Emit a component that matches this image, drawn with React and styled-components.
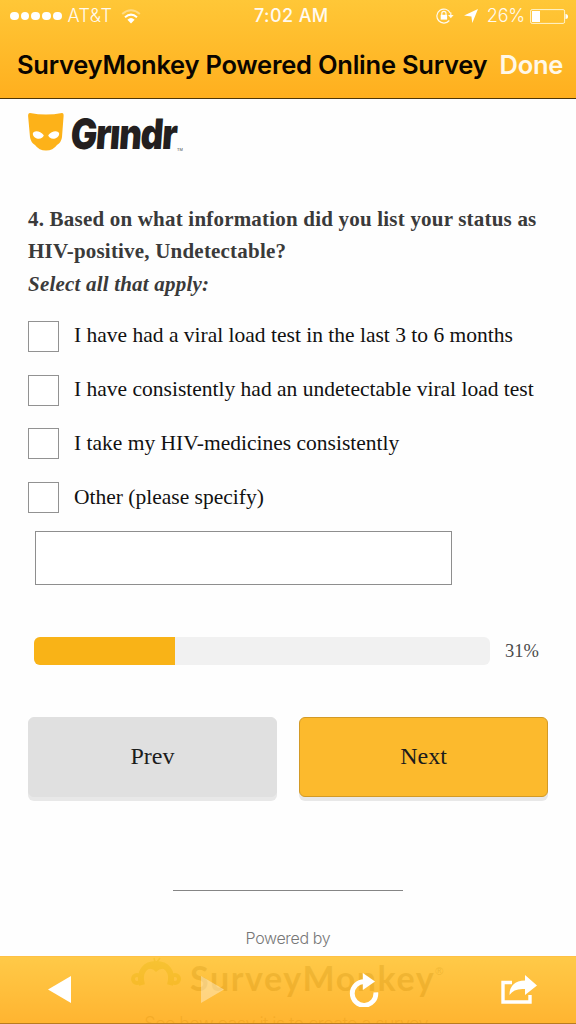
import React, { useState } from 'react';
import styled, { createGlobalStyle } from 'styled-components';

const GlobalStyle = createGlobalStyle`
  * {
    box-sizing: border-box;
  }

  body {
    margin: 0;
    background: #fefefe;
    overflow: hidden;
  }
`;

const Screen = styled.div`
  position: relative;
  width: 576px;
  height: 1024px;
  overflow: hidden;
  background: #fefefe;
  font-family: "Liberation Serif", "Times New Roman", serif;
  white-space: nowrap;
`;

const Header = styled.header`
  height: 99px;
  background: linear-gradient(#ffc737, #ffaf1e);
  border-bottom: 1px solid #4d3508;
  font-family: Inter, "Liberation Sans", sans-serif;
`;

const StatusBar = styled.div`
  height: 32px;
  padding: 0 8px 0 10px;
  display: grid;
  grid-template-columns: 244px 1fr auto;
  align-items: center;
  color: #fffaf0;
`;

const StatusGroup = styled.div`
  display: flex;
  align-items: center;
`;

const Signal = styled.div`
  display: flex;
  gap: 1.9px;
  margin-right: 6px;
`;

const Dot = styled.span`
  width: 8.8px;
  height: 8.8px;
  border-radius: 50%;
  background: #fff;
`;

const StatusText = styled.span`
  font-size: 18px;
  line-height: 32px;
  font-weight: ${({ weight }) => weight || 400};
  letter-spacing: ${({ spacing }) => spacing || '0'};
`;

const StatusIcon = styled.svg`
  display: block;
  margin-left: ${({ gap }) => gap}px;
`;

const TitleBar = styled.div`
  height: 64px;
  padding: 0 13px 0 17px;
  display: flex;
  align-items: center;
  justify-content: space-between;
`;

const Title = styled.h1`
  margin: 0;
  font-size: 25.5px;
  font-weight: 600;
  letter-spacing: -0.24px;
  color: #0a0500;
`;

const Done = styled.button`
  padding: 0;
  border: 0;
  background: none;
  font: 600 25.5px Inter, "Liberation Sans", sans-serif;
  letter-spacing: -0.3px;
  color: #fff8e8;
`;

const Page = styled.main`
  padding: 14px 28px 0;
`;

const Brand = styled.div`
  display: flex;
  height: 40px;
`;

const Wordmark = styled.div`
  width: 106px;
  margin-left: 7px;
  font: 900 42px/41px Inter, sans-serif;
  letter-spacing: -1.6px;
  color: #231f20;
  transform: scaleX(0.84) skewX(-5deg);
  transform-origin: 0 50%;
`;

const Trademark = styled.span`
  align-self: flex-end;
  font: 4px/6px "Liberation Sans", sans-serif;
  color: #444;
`;

const Question = styled.h2`
  margin: 50px 0 21px;
  font-size: 21px;
  line-height: 32.3px;
  font-weight: bold;
  letter-spacing: 0.2px;
  color: #3a3a3a;
`;

const Options = styled.div`
  display: grid;
  row-gap: 22.8px;
`;

const Option = styled.label`
  height: 31px;
  display: flex;
  align-items: center;
  font-size: 21.5px;
  color: #111;

  span {
    margin: -1px 0 0 15px;
  }
`;

const Checkbox = styled.input`
  appearance: none;
  width: 31px;
  height: 31px;
  margin: 0;
  border: 1px solid #929292;
  background: #fff;
`;

const OtherField = styled.input`
  display: block;
  width: 417px;
  height: 54px;
  margin: 18px 0 0 7px;
  border: 1px solid #8e8e8e;
  border-radius: 0;
  background: #fff;
`;

const Progress = styled.div`
  display: flex;
  align-items: center;
  margin: 52px 0 0 6px;
  font-size: 18.5px;
  line-height: 28px;
  color: #4a4a4a;
`;

const Track = styled.div`
  width: 456px;
  height: 28px;
  margin-right: 15px;
  overflow: hidden;
  border-radius: 6px;
  background: #f1f1f1;
`;

const Fill = styled.div`
  height: 100%;
  background: #f9b317;
`;

const Buttons = styled.div`
  display: grid;
  grid-template-columns: 249px 249px;
  justify-content: space-between;
  margin-top: 52px;
`;

const Button = styled.button`
  height: 80px;
  padding: 0 0 2px;
  border: 1px solid ${({ $primary }) => ($primary ? '#d39a26' : '#e0e0e0')};
  border-radius: 6px;
  background: ${({ $primary }) => ($primary ? '#fcba2d' : '#e0e0e0')};
  box-shadow: 0 4px 0 #e8e8e8;
  font: 24px "Liberation Serif", serif;
  color: #1c1c1c;
`;

const Footer = styled.footer`
  display: flex;
  flex-direction: column;
  align-items: center;
  margin-top: 93px;
  font-family: "Liberation Sans", sans-serif;
`;

const Rule = styled.div`
  width: 230px;
  height: 1px;
  background: #858585;
`;

const Powered = styled.div`
  margin-top: 37px;
  font: 300 16px/20px Inter, "Liberation Sans", sans-serif;
  letter-spacing: -0.35px;
  color: #777;
`;

const MonkeyBrand = styled.div`
  display: flex;
  width: 314px;
  height: 56px;
  margin-top: 9px;
  color: #444;
`;

const MonkeyName = styled.span`
  margin-left: 9px;
  font: 700 34px/42px Lato, sans-serif;
  letter-spacing: 1.6px;
`;

const Registered = styled.span`
  font: 11px/28px "Liberation Sans", sans-serif;
`;

const SurveyLink = styled.div`
  font: 300 18px/22px Inter, sans-serif;
  letter-spacing: -0.6px;
  color: #777;
`;

const Toolbar = styled.nav`
  position: absolute;
  left: 0;
  right: 0;
  bottom: 0;
  height: 68px;
  display: flex;
  align-items: center;
  padding-left: 48px;
  border-top: 1px solid rgba(255, 196, 75, 0.8);
  border-bottom: 1px solid #b97c20;
  background: linear-gradient(rgba(255, 197, 56, 0.92), rgba(255, 174, 31, 0.92));
`;

const ToolButton = styled.button`
  margin: 0 ${({ $space }) => $space || 0}px 0 0;
  padding: 0;
  border: 0;
  background: none;
  line-height: 0;
  opacity: ${({ disabled }) => (disabled ? 0.36 : 1)};
`;

const answers = [
  'I have had a viral load test in the last 3 to 6 months',
  'I have consistently had an undetectable viral load test',
  'I take my HIV-medicines consistently',
  'Other (please specify)',
];

const Wifi = () => (
  <StatusIcon gap={9} width="20" height="15" viewBox="0 0 20 15" fill="none" stroke="#fff" strokeWidth="2">
    <path d="M1.2 5Q10-2.5 18.8 5" opacity=".4" />
    <path d="M4 8.2Q10 3 16 8.2" />
    <path d="M6.4 10.8Q10 7.2 13.6 10.8L10 14.4Z" fill="#fff" stroke="none" />
  </StatusIcon>
);

const RotationLock = () => (
  <StatusIcon gap={0} width="18" height="16" viewBox="0 0 18 16" fill="none" stroke="#fffaf0" strokeWidth="1.2">
    <path d="M14.2 5A7 7 0 1 0 13.3 12.5M14.8 7V4.5" />
    <path d="M12 7H17.6L14.8 10.2Z" fill="#fffaf0" stroke="none" />
    <path d="M5.8 7V5.4a2.1 2.1 0 0 1 4.2 0V7" />
    <path d="M4.7 6.8h6.4v4.8H4.7z" fill="#fff" stroke="none" />
  </StatusIcon>
);

const Mask = () => (
  <svg width="36" height="38" viewBox="0 0 36 38">
    <path
      d="M2 0Q18 3 34 0Q35.8 0 35.6 3L34 24Q33.5 29 29 32Q25 37.5 18 37.5T7 32Q2.5 29 2 24L.1 3Q0 0 2 0Z"
      fill="#fdb219"
    />
    <path
      d="M4.8 20.7C5 17.5 12 17 15.8 22.3C14.5 27.5 5.3 26.5 4.8 20.7ZM31.2 20.7C31 17.5 24 17 20.2 22.3C21.5 27.5 30.7 26.5 31.2 20.7Z"
      fill="#fff"
    />
  </svg>
);

const Monkey = () => (
  <svg width="50" height="34" viewBox="0 0 50 34" fill="none" stroke="#93b400">
    <path d="M11 28C7 14 15 7 25 7S43 14 39 28" strokeWidth="6" />
    <path d="M14 14Q20 9 25 15Q31 9 37 14L35 8L25 4L15 8Z" fill="#93b400" stroke="none" />
    <circle cx="6" cy="22" r="4" strokeWidth="4" />
    <circle cx="44" cy="22" r="4" strokeWidth="4" />
    <path d="M24 5L23 1M26 5L29 1" strokeWidth="1.5" />
  </svg>
);

const App = () => {
  const [checked, setChecked] = useState([]);
  const progress = 31;

  const toggle = (index) => {
    setChecked(checked.includes(index) ? checked.filter((i) => i !== index) : [...checked, index]);
  };

  return (
    <>
      <GlobalStyle />
      <Screen>
        <Header>
          <StatusBar>
            <StatusGroup>
              <Signal>
                {[1, 2, 3, 4, 5].map((n) => <Dot key={n} />)}
              </Signal>
              <StatusText weight={300} spacing="0.4px">AT&amp;T</StatusText>
              <Wifi />
            </StatusGroup>
            <StatusText weight={500} spacing="0.4px">7:02 AM</StatusText>
            <StatusGroup>
              <RotationLock />
              <StatusIcon gap={10} width="14" height="14" viewBox="0 0 14 14">
                <path d="M14 0L8.3 14L7.4 7.4L0 6.4Z" fill="#fff" />
              </StatusIcon>
              <StatusText weight={300} spacing="-0.2px">&ensp;26%</StatusText>
              <StatusIcon gap={5} width="38" height="15" viewBox="0 0 38 15">
                <rect x=".6" y=".6" width="34" height="13.8" rx="1.5" fill="none" stroke="#fff4cf" />
                <path d="M2 2H10V13H2Z" fill="#fff" />
                <path d="M35.5 5Q38 5 38 7.5Q38 10 35.5 10Z" fill="#fff" />
              </StatusIcon>
            </StatusGroup>
          </StatusBar>
          <TitleBar>
            <Title>SurveyMonkey Powered Online Survey</Title>
            <Done>Done</Done>
          </TitleBar>
        </Header>

        <Page>
          <Brand>
            <Mask />
            <Wordmark>Grındr</Wordmark>
            <Trademark>TM</Trademark>
          </Brand>

          <Question>
            4. Based on what information did you list your status as<br />
            HIV-positive, Undetectable?<br />
            <em>Select all that apply:</em>
          </Question>

          <Options>
            {answers.map((answer, index) => (
              <Option key={answer}>
                <Checkbox type="checkbox" checked={checked.includes(index)} onChange={() => toggle(index)} />
                <span>{answer}</span>
              </Option>
            ))}
          </Options>
          <OtherField type="text" />

          <Progress>
            <Track>
              <Fill style={{ width: `${progress}%` }} />
            </Track>
            {progress}%
          </Progress>

          <Buttons>
            <Button>Prev</Button>
            <Button $primary>Next</Button>
          </Buttons>

          <Footer>
            <Rule />
            <Powered>Powered by</Powered>
            <MonkeyBrand>
              <Monkey />
              <MonkeyName>SurveyMonkey</MonkeyName>
              <Registered>®</Registered>
            </MonkeyBrand>
            <SurveyLink>See how easy it is to create a survey.</SurveyLink>
          </Footer>
        </Page>

        <Toolbar>
          <ToolButton $space={129}>
            <svg width="24" height="28" viewBox="0 0 24 28"><path d="M23 0V27L0 13.5Z" fill="#fff" /></svg>
          </ToolButton>
          <ToolButton $space={124} disabled>
            <svg width="24" height="28" viewBox="0 0 24 28"><path d="M0 0V27L23 13.5Z" fill="#fff" /></svg>
          </ToolButton>
          <ToolButton $space={122}>
            <svg width="30" height="34" viewBox="0 0 30 34">
              <path d="M15.5 8.7A11.8 11.8 0 1 0 26.8 19.4" fill="none" stroke="#fff" strokeWidth="4.8" />
              <path d="M13.8 0L26 8.5L13.8 17Z" fill="#fff" />
            </svg>
          </ToolButton>
          <ToolButton>
            <svg width="36" height="30" viewBox="0 0 36 30">
              <path d="M11 7.5H2V27H29V20" fill="none" stroke="#fff" strokeWidth="3.4" />
              <path d="M24 0L36 10.5L24 20V14Q13 13 8.5 20Q8.5 6 24 5.5Z" fill="#fff" />
            </svg>
          </ToolButton>
        </Toolbar>
      </Screen>
    </>
  );
};

export default App;
